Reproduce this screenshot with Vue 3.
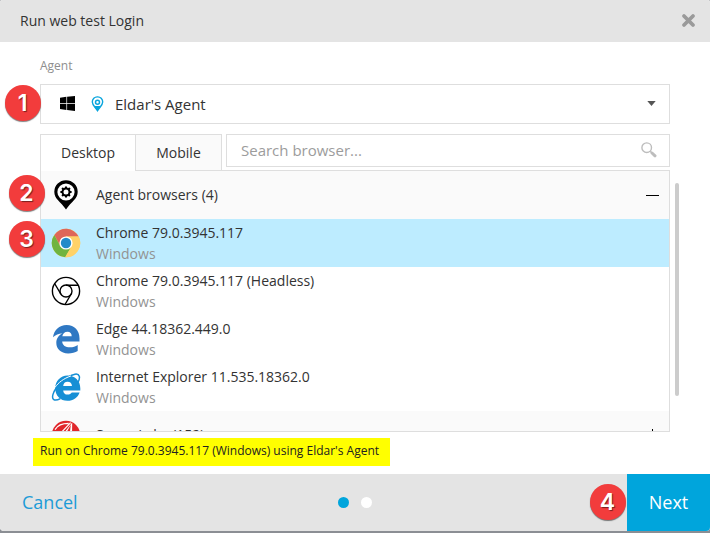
<script setup>
import { ref } from 'vue'

const tabs = ['Desktop', 'Mobile']
const activeTab = ref('Desktop')
const selected = ref(0)
const browsers = [
  { name: 'Chrome 79.0.3945.117', os: 'Windows', icon: 'chrome' },
  { name: 'Chrome 79.0.3945.117 (Headless)', os: 'Windows', icon: 'headless' },
  { name: 'Edge 44.18362.449.0', os: 'Windows', icon: 'edge' },
  { name: 'Internet Explorer 11.535.18362.0', os: 'Windows', icon: 'ie' },
]
</script>

<template>
  <div class="dialog">
    <header class="header">
      <h1 class="title">Run web test Login</h1>
      <svg class="close" width="15" height="15" viewBox="0 0 15 15">
        <path d="M3 3L12 12M12 3L3 12" fill="none" stroke="#9a9a9a" stroke-width="3.8" stroke-linecap="round" />
      </svg>
    </header>

    <main class="content">
      <label class="label">Agent</label>
      <div class="select">
        <svg class="win" width="15" height="15" viewBox="0 0 15 15">
          <path d="M0 1.7L6.4 .8V7H0ZM7.1 .7L15 0V7H7.1ZM0 7.7H6.4V13.9L0 13ZM7.1 7.7H15V15L7.1 14Z" fill="#000" />
        </svg>
        <svg class="agent-pin" width="13" height="16" viewBox="0 0 13 16">
          <path d="M6.5 .9A5 5 0 0 0 1.3 6C1.3 9.1 4.4 11.2 6.5 14.6C8.6 11.2 11.7 9.1 11.7 6A5 5 0 0 0 6.5 .9Z" fill="none" stroke="#0aa5dd" stroke-width="1.4" />
          <path d="M3.2 10H9.8L6.5 15.2Z" fill="#0aa5dd" />
          <circle cx="6.5" cy="6.2" r="2" fill="none" stroke="#0aa5dd" stroke-width="1.5" />
        </svg>
        <span class="select-text">Eldar's Agent</span>
        <svg class="caret" width="9" height="5" viewBox="0 0 9 5"><path d="M.3 0H8.7L4.5 5Z" fill="#555" /></svg>
        <b class="step step-1">1</b>
      </div>

      <div class="toolbar">
        <div class="tabs">
          <button v-for="tab in tabs" :key="tab" class="tab" :class="{ active: tab === activeTab }" @click="activeTab = tab">{{ tab }}</button>
        </div>
        <div class="search">
          <span>Search browser...</span>
          <svg width="16" height="16" viewBox="0 0 16 16">
            <circle cx="5.7" cy="5.7" r="4.8" fill="none" stroke="#bdbdbd" stroke-width="1.4" />
            <path d="M9.3 9.3L11 11" stroke="#bdbdbd" stroke-width="1.5" />
            <path d="M11 11L14 13.8" stroke="#bdbdbd" stroke-width="3" stroke-linecap="round" />
          </svg>
        </div>
      </div>

      <div class="list-area">
        <div class="list">
          <div class="group">
            <svg class="icon" width="30" height="30" viewBox="0 0 30 30">
              <path d="M15 .2A11.6 11.6 0 0 0 3.3 11.8C3.3 19 9.5 21.5 15 29.5C20.5 21.5 26.7 19 26.7 11.8A11.6 11.6 0 0 0 15 .2Z" fill="#000" />
              <circle cx="15" cy="12" r="8.6" fill="#fff" />
              <circle cx="15" cy="12" r="3.5" fill="none" stroke="#000" stroke-width="2" />
              <g stroke="#000" stroke-width="2.1">
                <path d="M15 6.4V8.5M15 15.5V17.6M9.4 12H11.5M18.5 12H20.6M11.1 8.1L12.5 9.5M17.5 14.5L18.9 15.9M11.1 15.9L12.5 14.5M17.5 9.5L18.9 8.1" />
              </g>
            </svg>
            <span>Agent browsers (4)</span>
            <i class="minus"></i>
          </div>

          <div v-for="(b, i) in browsers" :key="b.name" class="row" :class="{ selected: i === selected }" @click="selected = i">
            <svg v-if="b.icon === 'chrome'" class="icon" width="30" height="30" viewBox="0 0 30 30">
              <circle cx="15" cy="15" r="14.2" fill="#ffd268" />
              <path d="M3.3 7A14.2 14.2 0 0 1 27.6 8.5H15L9.4 18.3Z" fill="#de6759" />
              <path d="M3.3 7A14.2 14.2 0 0 0 14.2 29.2L20.6 18.2L9.4 18.3Z" fill="#70b43f" />
              <path d="M15 8.5H27.6A14.2 14.2 0 0 1 14.2 29.2L20.6 18.2Z" fill="#ffd268" />
              <circle cx="15" cy="15" r="6.6" fill="#fff" />
              <circle cx="15" cy="15" r="5.2" fill="#238bc9" />
            </svg>
            <svg v-else-if="b.icon === 'headless'" class="icon" width="30" height="30" viewBox="0 0 30 30" fill="none" stroke="#000" stroke-width="1.4">
              <circle cx="15" cy="15" r="13.6" />
              <circle cx="15" cy="15" r="6" />
              <path d="M15 9.2H27.2M9.8 18L3.6 7.5M20.2 18L14 28.5" />
            </svg>
            <svg v-else-if="b.icon === 'edge'" class="icon" width="30" height="30" viewBox="0 0 30 30">
              <path d="M2 13.3C3 6 8.2 1 15.6 1C23.6 1 28.5 6.5 28.5 14.2V17.4H11.2C11.4 21.4 14.7 23.2 18.8 23.2C22 23.2 24.6 22.3 26.7 20.9V27C24.3 28.6 20.8 29.4 17.2 29.4C9.6 29.4 5.3 24.8 5.3 18.8C5.3 14.5 7.6 11.3 11.5 9.3C7.7 9.5 4.4 11 2 13.3ZM11.3 12.3H20.7C20.7 9.5 19.2 7.8 16.5 7.8C13.7 7.8 11.8 9.6 11.3 12.3Z" fill="#2f78c3" fill-rule="evenodd" />
            </svg>
            <svg v-else class="icon" width="30" height="30" viewBox="0 0 30 30">
              <path d="M27 10.5C29.6 5.5 28.8 1.4 24 2.2C20 2.9 14.6 6.2 10 10.6M5.4 15.8C3.7 18.2 2.6 20.4 2 22.4C.5 27.4 3.2 29.8 9.4 26.6" fill="none" stroke="#168fd5" stroke-width="1.5" />
              <path d="M16.4 3.4C23.8 3.4 29.3 8.6 29.3 16.2V18.4H12.2C12.3 21 14 22.6 16.6 22.6C18.6 22.6 20 21.8 20.8 20.5H28.6C26.9 25.6 22.4 28.8 16.4 28.8C9.4 28.8 4.2 23.4 4.2 16.2C4.2 8.9 9.6 3.4 16.4 3.4ZM12.2 13.9H21C20.8 11.2 19.2 9.7 16.6 9.7C14 9.7 12.4 11.2 12.2 13.9Z" fill="#168fd5" fill-rule="evenodd" />
              <path d="M4 15.4C7.4 10.6 12.4 6.6 20 3.9" fill="none" stroke="#fff" stroke-width="1" />
            </svg>
            <div class="info">
              <span>{{ b.name }}</span>
              <span class="os">{{ b.os }}</span>
            </div>
          </div>

          <div class="group">
            <svg class="icon" width="30" height="30" viewBox="0 0 30 30">
              <circle cx="15" cy="15" r="14.2" fill="#e0262b" />
              <path d="M4 9.6C6.4 5.6 11 3.4 17.6 3.4M19.6 2.6L8 15" fill="none" stroke="#fff" stroke-width="1.2" />
              <path d="M21.2 2.4L11.5 15H14L19.8 4.8L18.6 15H21Z" fill="#fff" />
            </svg>
            <span>Sauce Labs (152)</span>
            <i class="plus"></i>
          </div>
        </div>
        <div class="scrollbar"></div>
        <b class="step step-2">2</b>
        <b class="step step-3">3</b>
      </div>

      <p class="summary">Run on Chrome 79.0.3945.117 (Windows) using Eldar's Agent</p>
    </main>

    <footer class="footer">
      <button class="cancel">Cancel</button>
      <div class="dots"><i class="dot on"></i><i class="dot"></i></div>
      <button class="next">Next<b class="step step-4">4</b></button>
    </footer>
  </div>
</template>

<style>
body { background: #8b8e94; }
</style>

<style scoped>
.dialog {
  width: 710px;
  height: 531px;
  display: flex;
  flex-direction: column;
  background: #fff;
  border-radius: 2px 2px 4px 4px;
  overflow: hidden;
  font-family: "Open Sans", sans-serif;
  font-size: 14px;
  line-height: 20px;
  color: #333;
}
.dialog * { box-sizing: border-box; }
button { font: inherit; border: 0; padding: 0; background: none; cursor: pointer; }
.header {
  height: 42px;
  flex: none;
  display: flex;
  align-items: center;
  justify-content: space-between;
  padding: 0 14px 0 20px;
  background: #e4e4e4;
}
.title { margin: 0; font-size: 14px; font-weight: 400; }
.close { margin-top: -1px; }
.content { flex: 1; display: flex; flex-direction: column; align-items: flex-start; padding: 14px 30px 0 40px; }
.label { height: 28px; font-size: 12px; color: #8e8e8e; }
.select {
  position: relative;
  width: 630px;
  height: 40px;
  flex: none;
  display: flex;
  align-items: center;
  padding: 0 13px 0 19px;
  border: 1px solid #dedede;
}
.win { margin: -1px 16px 0 0; }
.agent-pin { margin: -1px 11px 0 0; }
.select-text { font-size: 15px; }
.caret { margin: -2px 0 0 auto; }
.toolbar { width: 630px; height: 36px; flex: none; display: flex; gap: 4px; margin-top: 10px; }
.tabs { display: flex; width: 182px; border: 1px solid #dedede; border-bottom: 0; }
.tab { width: 85px; background: #fafafa; color: #333; }
.tab.active { width: 95px; flex: none; background: #fff; border-right: 1px solid #dedede; position: relative; margin-bottom: -1px; z-index: 1; }
.search {
  flex: 1;
  height: 33px;
  display: flex;
  align-items: center;
  justify-content: space-between;
  padding: 0 12px 1px 14px;
  border: 1px solid #dedede;
  font-size: 15px;
  color: #9c9c9c;
}
.list-area { position: relative; display: flex; gap: 5px; }
.list { width: 630px; height: 262px; border: 1px solid #dedede; overflow: hidden; }
.group, .row { height: 48px; display: flex; align-items: center; padding-left: 10px; }
.group { background: #fafafa; }
.row.selected { background: #bdecff; }
.icon { flex: none; margin-right: 15px; }
.info { display: flex; flex-direction: column; padding-bottom: 1px; line-height: 21px; }
.os { color: #939393; }
.minus { width: 13px; height: 1px; margin: 0 10px 0 auto; background: #000; }
.plus {
  width: 13px;
  height: 13px;
  margin: 0 10px 0 auto;
  background: linear-gradient(#000, #000) center / 13px 1px no-repeat, linear-gradient(#000, #000) center / 1px 13px no-repeat;
}
.scrollbar { width: 4px; height: 213px; margin-top: 13px; border-radius: 2px; background: #ccc; }
.summary {
  margin: 6px 0 0 -7px;
  width: 357px;
  height: 28px;
  padding-left: 7px;
  background: #ff0;
  font-size: 12px;
  line-height: 26px;
  color: #222;
  white-space: nowrap;
}
.footer {
  height: 57px;
  flex: none;
  display: grid;
  grid-template-columns: 1fr auto 1fr;
  align-items: center;
  background: #e4e4e4;
  font-size: 18px;
}
.cancel { justify-self: start; margin-left: 22px; padding-bottom: 2px; color: #1d9bd7; }
.dots { display: flex; gap: 12px; }
.dot { width: 11px; height: 11px; border-radius: 50%; background: #fff; }
.dot.on { background: #00a5dc; }
.next { position: relative; justify-self: end; width: 83px; height: 57px; padding-bottom: 2px; background: #00a5dc; color: #fff; }
.step {
  position: absolute;
  z-index: 2;
  width: 36px;
  height: 36px;
  border-radius: 50%;
  background: #f23c3c;
  box-shadow: 0 1px 1px rgba(0, 0, 0, .5);
  color: #fff;
  font: 600 23px/36px Inter, sans-serif;
  text-align: center;
  text-shadow: 1px 1px 1px rgba(0, 0, 0, .5);
}
.step-1 { left: -36.5px; top: 0; }
.step-2 { left: -31.5px; top: 5px; }
.step-3 { left: -31.5px; top: 51px; }
.step-4 { left: -37.5px; top: 10px; }
</style>
